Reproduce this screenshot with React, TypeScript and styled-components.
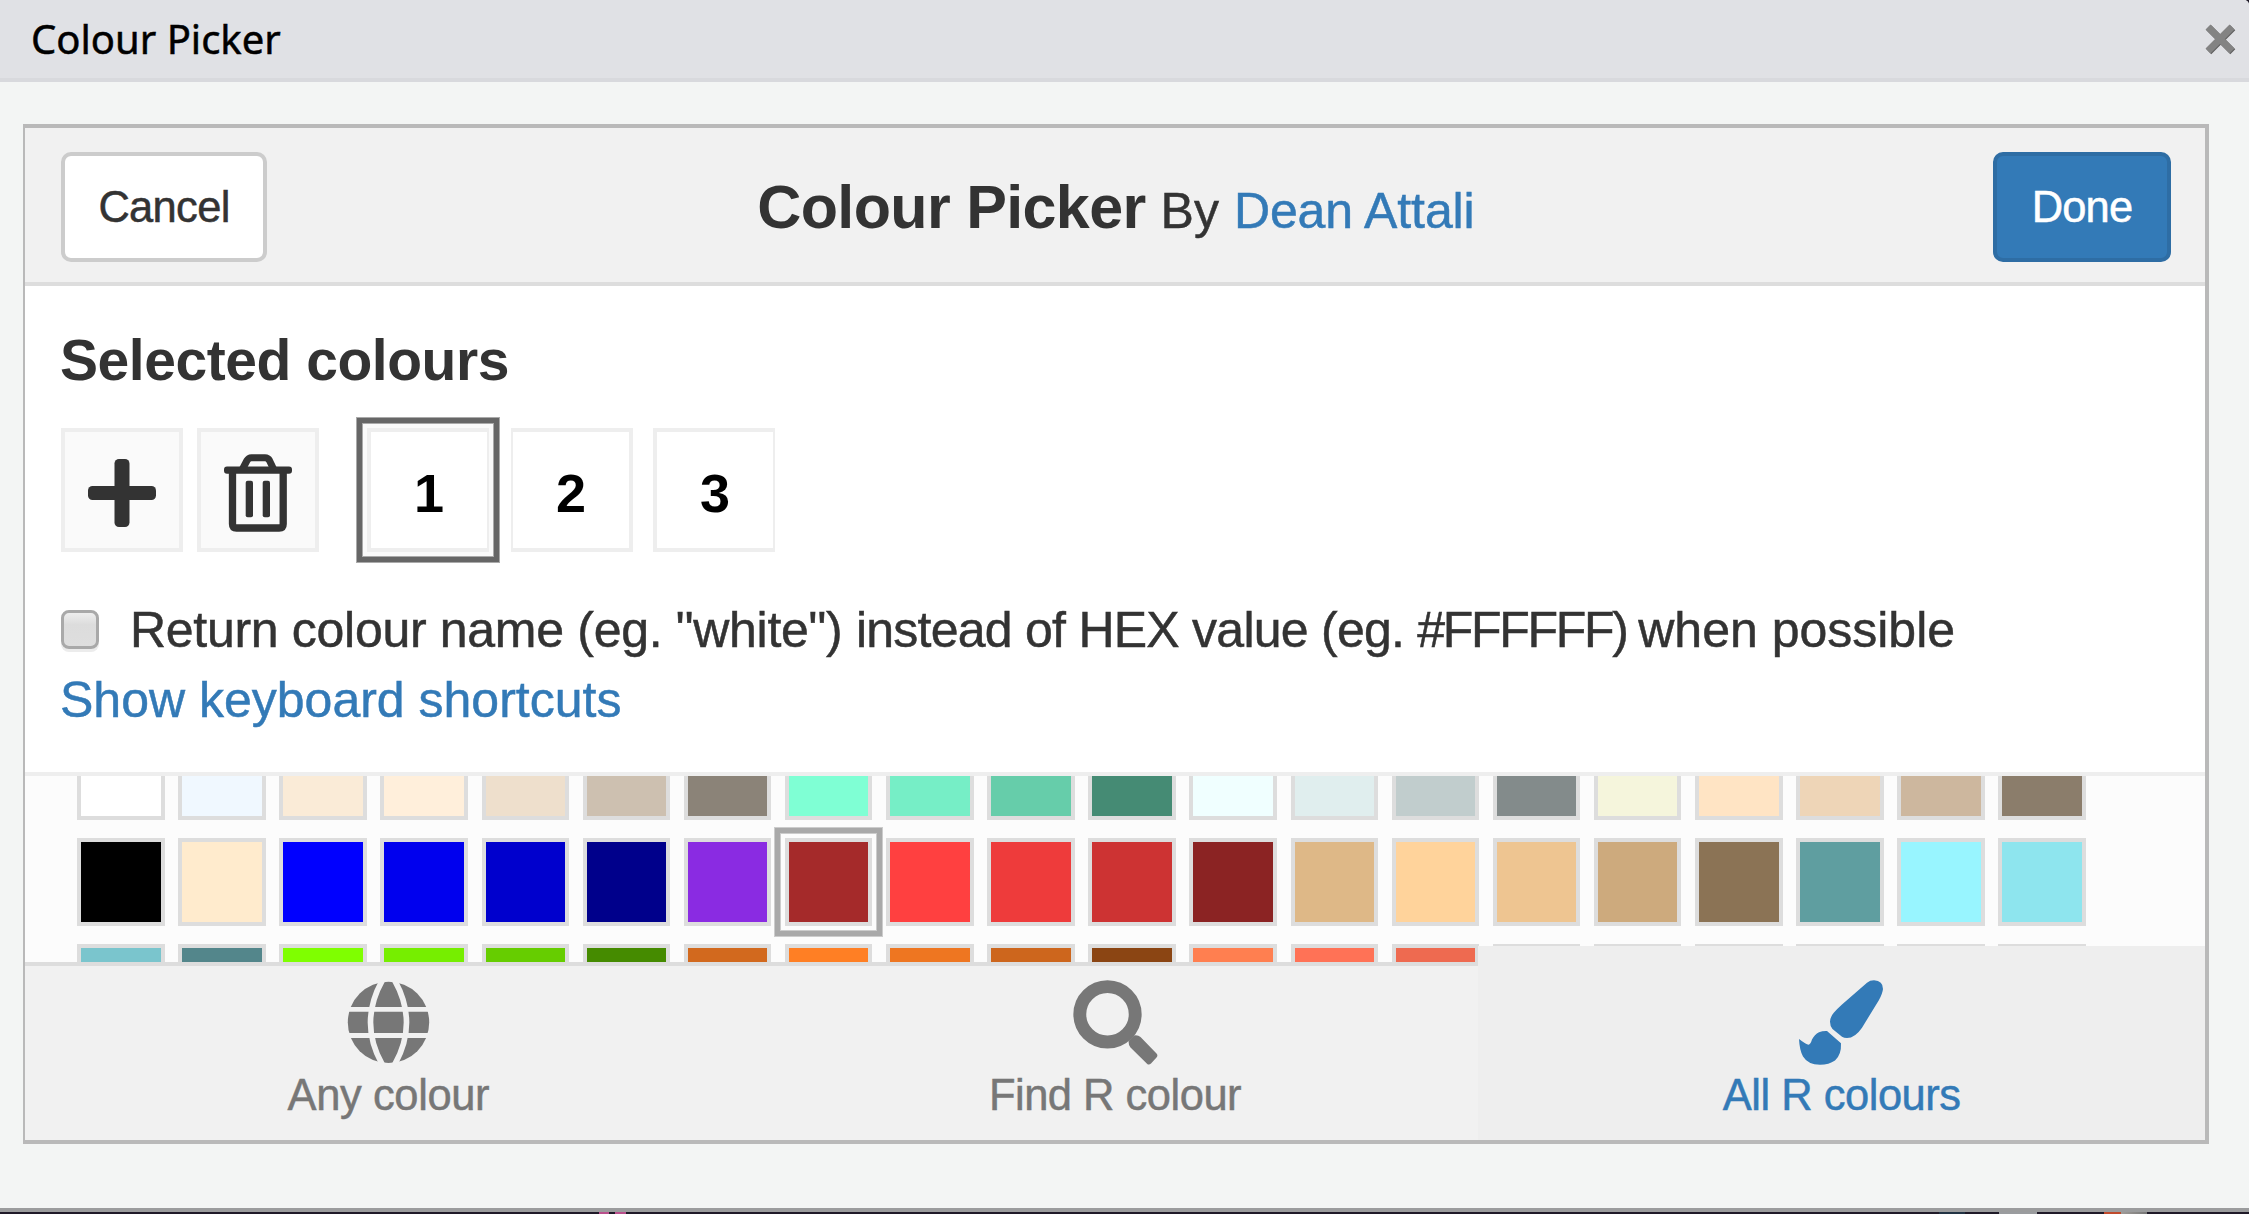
import React from 'react';
import styled, { createGlobalStyle } from 'styled-components';

const Global = createGlobalStyle`
  html, body { margin: 0; padding: 0; }
  * { box-sizing: border-box; }
  body { width: 2249px; height: 1214px; overflow: hidden; background: #1f1a28; color: #333; font-family: "Liberation Sans", Arial, sans-serif; }
`;

const Dialog = styled.div`
  width: 2249px;
  height: 1212px;
  display: flex;
  flex-direction: column;
  background: #f3f5f4;
  border-bottom: 4px solid #9b9c9d;
  border-top-right-radius: 5px;
  overflow: hidden;
`;
/* Sliver of the desktop that shows under the dialog */
const Desktop = styled.div`
  height: 2px;
  background: linear-gradient(
    90deg,
    #1f1a28 599px, #b9508c 599px, #b9508c 609px, #1f1a28 609px, #1f1a28 615px,
    #b9508c 615px, #b9508c 626px, #1f1a28 626px, #1f1a28 1939px, #223344 1939px,
    #223344 1965px, #1f1a28 1965px, #1f1a28 1999px, #9a9c9f 1999px, #9a9c9f 2037px,
    #1f1a28 2037px, #1f1a28 2104px, #c04a2c 2104px, #c04a2c 2121px, #a09c98 2121px,
    #777 2147px, #1f1a28 2147px
  );
`;
const TitleBar = styled.div`
  height: 82px;
  flex: none;
  display: flex;
  align-items: center;
  justify-content: space-between;
  padding: 0 12px 0 31px;
  background: #e0e1e5;
  border-bottom: 4px solid #d8d9dd;
`;
const Fit = styled.span<{ $size: number; $ls?: number; $bold?: boolean; $color?: string }>`
  font-size: ${p => p.$size}px;
  letter-spacing: ${p => p.$ls ?? 0}px;
  font-weight: ${p => (p.$bold ? 700 : 400)};
  color: ${p => p.$color ?? 'inherit'};
  white-space: pre;
  -webkit-text-stroke: ${p => (p.$bold ? '0' : '0.5px')} currentColor;
`;
const WindowTitle = styled(Fit)`
  font-family: "Noto Sans", sans-serif;
  line-height: 54px;
  padding-bottom: 1px;
`;
const Panel = styled.main`
  margin: 42px 40px 0 23px;
  height: 1020px;
  display: flex;
  flex-direction: column;
  background: #fff;
  border: 4px solid #b9b9b9;
  border-left-width: 2px;
`;
const Header = styled.header`
  height: 158px;
  flex: none;
  display: grid;
  grid-template-columns: 1fr auto 1fr;
  align-items: center;
  padding: 4px 34px 0 36px;
  background: #f1f1f1;
  border-bottom: 4px solid #ddd;
`;
const Button = styled.button<{ $primary?: boolean }>`
  width: ${p => (p.$primary ? 178 : 206)}px;
  height: 110px;
  padding: 0;
  justify-self: ${p => (p.$primary ? 'end' : 'start')};
  border-radius: 10px;
  border: 4px solid ${p => (p.$primary ? '#2e6da4' : '#ccc')};
  background: ${p => (p.$primary ? '#337ab7' : '#fff')};
  color: ${p => (p.$primary ? '#fff' : '#333')};
  font-family: inherit;
`;
const Heading = styled.h1`
  margin: 0;
  white-space: nowrap;
  font-size: 54px;
`;
const Section = styled.section`
  height: 490px;
  flex: none;
  padding: 42px 36px 0 35px;
  border-bottom: 4px solid #eee;
`;
const SubHeading = styled.h2`
  margin: 0;
  height: 100px;
  line-height: 65px;
`;
const ChipRow = styled.div`
  display: flex;
  height: 124px;
  padding-left: 1px;
`;
const Chip = styled.div<{ $left: number; $tool?: boolean; $active?: boolean; $thin?: 'left' | 'right' }>`
  width: 122px;
  height: 124px;
  margin-left: ${p => p.$left}px;
  padding-top: 6px;
  display: flex;
  align-items: center;
  justify-content: center;
  background: ${p => (p.$tool ? '#fafafa' : '#fff')};
  border: 4px solid #eee;
  ${p => p.$thin && `border-${p.$thin}-width: 2px;`}
  color: ${p => (p.$tool ? '#333' : '#000')};
  box-shadow: ${p => (p.$active ? '0 0 0 4px #fafafa, 0 0 0 5px #aaa, 0 0 0 10px #666, 0 0 0 11px #aaa' : 'none')};
`;
const Option = styled.label`
  margin-top: 47px;
  height: 62px;
  display: flex;
  align-items: center;
`;
const Check = styled.span`
  width: 38px;
  height: 39px;
  margin: 0 31px 1px 1px;
  border: 3px solid #a9a9a9;
  border-radius: 8px;
  background: linear-gradient(#eee, #dcdcdc 35%, #dedede);
  box-shadow: 0 3px 0 #ececec;
`;
const Shortcuts = styled.div`
  margin-top: 8px;
  line-height: 62px;
`;
const Swatches = styled.div`
  height: 186px;
  flex: none;
  overflow: hidden;
  display: grid;
  grid-template-columns: repeat(20, 87.5px);
  grid-auto-rows: 88px;
  column-gap: 13.64px;
  row-gap: 18px;
  align-content: end;
  padding: 0 0 0 52px;
  background: #fcfcfc;
`;
const Swatch = styled.div<{ $c: string; $active?: boolean }>`
  background: ${p => p.$c};
  border: 4px solid #ddd;
  transform: translateY(70px);
  box-shadow: ${p => (p.$active ? '0 0 0 4px #fcfcfc, 0 0 0 5px #ccc, 0 0 0 10px #a9a9a9, 0 0 0 11px #ccc' : 'none')};
`;
const Tabs = styled.nav`
  flex: 1;
  display: flex;
`;
const Tab = styled.div<{ $active?: boolean }>`
  flex: 1;
  display: flex;
  flex-direction: column;
  align-items: center;
  padding-top: ${p => (p.$active ? 34 : 14)}px;
  margin-top: ${p => (p.$active ? -16 : 0)}px;
  z-index: 1;
  color: ${p => (p.$active ? '#337ab7' : '#777')};
  background: ${p => (p.$active ? '#eee' : '#f1f1f1')};
  border-top: ${p => (p.$active ? '0' : '4px solid #ddd')};
  line-height: 60px;
`;

const CloseIcon = () => (
  <svg width="34" height="34" viewBox="0 0 34 34">
    <path d="M5 5L29 29M29 5L5 29" stroke="#5f5f5f" strokeWidth="7" transform="translate(.8 .8)" />
    <path d="M5 5L29 29M29 5L5 29" stroke="#838383" strokeWidth="7" />
  </svg>
);
const PlusIcon = () => (
  <svg width="68" height="68" viewBox="0 0 68 68" fill="currentColor">
    <rect x="26.500" width="15" height="68" rx="4.500" />
    <rect y="27" width="68" height="14" rx="4.500" />
  </svg>
);
const TrashIcon = () => (
  <svg width="68" height="78" viewBox="0 0 68 78" fill="none" stroke="currentColor">
    <path d="M18 16L23 6.500Q24.500 3.700 27.500 3.700H41Q44 3.700 45.500 6.500L50 16" strokeWidth="7" />
    <rect x="0" y="12.500" width="68" height="7.200" rx="3" fill="currentColor" stroke="none" />
    <path d="M8.500 17V70Q8.500 74 12.500 74H55.200Q59.200 74 59.200 70V17" strokeWidth="7.300" />
    <rect x="21.700" y="26.700" width="7.300" height="36.600" rx="2" fill="currentColor" stroke="none" />
    <rect x="38.700" y="26.700" width="7.300" height="36.600" rx="2" fill="currentColor" stroke="none" />
  </svg>
);
const GlobeIcon = () => (
  <svg width="85" height="85" viewBox="0 0 85 85">
    <circle cx="42.500" cy="42.400" r="40.700" fill="currentColor" />
    <path d="M0 29.400H85M0 55.500H85" stroke="#f1f1f1" strokeWidth="4.900" />
    <path d="M36.500 0Q12.500 42.500 36.500 85M48.500 0Q72.500 42.500 48.500 85" fill="none" stroke="#f1f1f1" strokeWidth="5.600" />
  </svg>
);
const SearchIcon = () => (
  <svg width="85" height="85" viewBox="0 0 85 85" fill="none" stroke="currentColor">
    <circle cx="34.500" cy="34.300" r="27.700" strokeWidth="12.900" />
    <path d="M61 55.500Q65 54.800 67.500 57L83.500 73.500Q85.300 75.300 83.500 77.500L78 83.500Q76 85.500 74 83.700L57.500 67.500Q55.500 65.500 55.500 61Z" fill="currentColor" stroke="none" />
  </svg>
);
const BrushIcon = () => (
  <svg width="85" height="85" viewBox="0 0 85 85" fill="currentColor">
    <path d="M68 2.700Q71 .3 75 .3Q84 .8 84 9Q83.500 13.500 80 20L63 47.700Q56 58 48 58Q45 58 43 56.700L33.500 49Q31 46 31 41.700Q31.300 36.500 35 32.500Q38 29 43 24.500Z" />
    <path d="M28 51Q23.500 50.800 20 52.300Q15.500 54.500 13 59.500Q11.500 64.500 9.500 64.700Q7.500 64.800 0 59Q.5 70 4 76.500Q9 84.700 21 84.700Q30 84.700 36 80.500Q42.500 75 42 63.300Z" />
  </svg>
);

const colours = `#ffffff #f0f8ff #faebd7 #ffefdb #eedfcc #cdc0b0 #8b8378 #7fffd4 #76eec6 #66cdaa #458b74 #f0ffff #e0eeee #c1cdcd #838b8b #f5f5dc #ffe4c4 #eed5b7 #cdb79e #8b7d6b
#000000 #ffebcd #0000ff #0000ee #0000cd #00008b #8a2be2 #a52a2a #ff4040 #ee3b3b #cd3333 #8b2323 #deb887 #ffd39b #eec591 #cdaa7d #8b7355 #5f9ea0 #98f5ff #8ee5ee
#7ac5cd #53868b #7fff00 #76ee00 #66cd00 #458b00 #d2691e #ff7f24 #ee7621 #cd661d #8b4513 #ff7f50 #ff7256 #ee6a50 #cd5b45 #8b3e2f #6495ed #fff8dc #eee8cd #cdc8b1`.split(/\s+/);

export default function App() {
  return (
    <>
      <Global />
      <Dialog>
        <TitleBar>
          <WindowTitle $size={40} $color="#000">Colour Picker</WindowTitle>
          <CloseIcon />
        </TitleBar>
        <Panel>
          <Header>
            <Button><Fit $size={43.5} $ls={-0.7}>Cancel</Fit></Button>
            <Heading>
              <Fit $size={61} $ls={-0.65} $bold>Colour Picker</Fit>{' '}
              <Fit $size={50}>By</Fit>{' '}
              <Fit $size={50} $ls={-0.1} $color="#337ab7">Dean Attali</Fit>
            </Heading>
            <Button $primary><Fit $size={43.5} $ls={-0.9}>Done</Fit></Button>
          </Header>
          <Section>
            <SubHeading><Fit $size={57} $ls={-0.45} $bold>Selected colours</Fit></SubHeading>
            <ChipRow>
              <Chip $left={0} $tool><PlusIcon /></Chip>
              <Chip $left={14} $tool><TrashIcon /></Chip>
              <Chip $left={48} $active $thin="right"><Fit $size={54} $bold>1</Fit></Chip>
              <Chip $left={22} $thin="left"><Fit $size={54} $bold>2</Fit></Chip>
              <Chip $left={20} $thin="right"><Fit $size={54} $bold>3</Fit></Chip>
            </ChipRow>
            <Option>
              <Check />
              <Fit $size={50} $ls={-0.3}>Return colour name (eg. "white") </Fit>
              <Fit $size={50} $ls={-0.75}>instead of HEX value (eg. </Fit>
              <Fit $size={50} $ls={-2.3}>#FFFFFF) </Fit>
              <Fit $size={50}>when possible</Fit>
            </Option>
            <Shortcuts><Fit $size={50} $color="#337ab7">Show keyboard shortcuts</Fit></Shortcuts>
          </Section>
          <Swatches>
            {colours.map((c, i) => <Swatch key={i} $c={c} $active={i === 27} />)}
          </Swatches>
          <Tabs>
            <Tab><GlobeIcon /><Fit $size={43.5} $ls={-0.4}>Any colour</Fit></Tab>
            <Tab><SearchIcon /><Fit $size={43.5} $ls={-0.5}>Find R colour</Fit></Tab>
            <Tab $active><BrushIcon /><Fit $size={43.5} $ls={-0.5}>All R colours</Fit></Tab>
          </Tabs>
        </Panel>
      </Dialog>
      <Desktop />
    </>
  );
}
